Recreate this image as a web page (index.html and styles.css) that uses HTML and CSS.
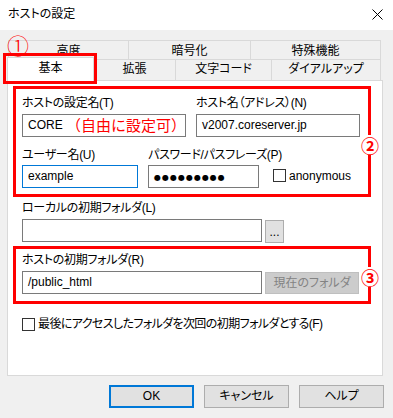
FILE: index.html
```html
<!DOCTYPE html>
<html lang="ja">
<head>
<meta charset="utf-8">
<title>ホストの設定</title>
<link rel="stylesheet" href="styles.css">
</head>
<body>
<div class="window">
  <div class="titlebar">
    <span class="title">ホストの設定</span>
    <svg class="close" width="11" height="11" viewBox="0 0 11 11"><path d="M0.5 0.5 L10.5 10.5 M10.5 0.5 L0.5 10.5" stroke="#000" stroke-width="1" fill="none"/></svg>
  </div>
  <div class="content">
    <div class="tabs">
      <div class="tabrow tabrow1">
        <div class="tab t-kodo">高度</div>
        <div class="tab t-ango">暗号化</div>
        <div class="tab t-toku">特殊機能</div>
      </div>
      <div class="tabrow tabrow2">
        <div class="tab sel t-kihon">基本</div>
        <div class="tab t-kaku">拡張</div>
        <div class="tab t-moji">文字コード</div>
        <div class="tab t-dial">ダイアルアップ</div>
      </div>
      <div class="mark-tab"></div>
      <div class="num num1">①</div>
    </div>
    <div class="panel">
      <div class="redbox box2">
        <div class="row row-a">
          <div class="field w164">
            <div class="label">ホストの設定名(T)</div>
            <div class="input">CORE <span class="note">（自由に設定可）</span></div>
          </div>
          <div class="field w164">
            <div class="label">ホスト名（アドレス）(N)</div>
            <div class="input">v2007.coreserver.jp</div>
          </div>
        </div>
        <div class="row row-b">
          <div class="field w116">
            <div class="label">ユーザー名(U)</div>
            <div class="input focus">example</div>
          </div>
          <div class="field w111">
            <div class="label">パスワード/パスフレーズ(P)</div>
            <div class="input pw"><span class="dots">●●●●●●●●●</span></div>
          </div>
          <div class="check anon"><span class="cb"></span><span>anonymous</span></div>
        </div>
        <div class="num num2">②</div>
      </div>
      <div class="local">
        <div class="label">ローカルの初期フォルダ(L)</div>
        <div class="inrow">
          <div class="input w240"></div>
          <div class="btn small">...</div>
        </div>
      </div>
      <div class="redbox box3">
        <div class="label">ホストの初期フォルダ(R)</div>
        <div class="inrow">
          <div class="input w240">/public_html</div>
          <div class="btn disabled">現在のフォルダ</div>
        </div>
        <div class="num num3">③</div>
      </div>
      <div class="check last"><span class="cb"></span><span class="cjk">最後にアクセスしたフォルダを次回の初期フォルダとする(F)</span></div>
    </div>
    <div class="buttons">
      <div class="btn big default">OK</div>
      <div class="btn big">キャンセル</div>
      <div class="btn big">ヘルプ</div>
    </div>
  </div>
</div>
</body>
</html>
```
FILE: styles.css
```css
html, body {
  margin: 0;
  padding: 0;
}
body {
  width: 393px;
  height: 418px;
  overflow: hidden;
  background: #f0f0f0;
  font-family: "Liberation Sans", "Noto Sans CJK JP", sans-serif;
  font-size: 12px;
  color: #000;
  font-feature-settings: "palt";
}
.window {
  display: flex;
  flex-direction: column;
  height: 418px;
}
.titlebar {
  height: 30px;
  background: #fff;
  display: flex;
  align-items: center;
  justify-content: space-between;
  padding: 0 10px 3px 8px;
  box-sizing: border-box;
}
.title { line-height: 16px; }
.close { display: block; margin-top: 1px; }
.content {
  padding: 10px 10px 0 7px;
}
.tabs {
  position: relative;
}
.tabrow {
  display: flex;
}
.tabrow1 {
  height: 19px;
  margin-left: 1px;
}
.tabrow2 {
  height: 21px;
}
.tab {
  box-sizing: border-box;
  border: 1px solid #d9d9d9;
  border-bottom: none;
  background: #f0f0f0;
  text-align: center;
  margin-right: -1px;
}
.tabrow1 .tab {
  height: 19px;
  line-height: 17px;
  padding-top: 2px;
}
.tabrow2 .tab {
  height: 21px;
  line-height: 18px;
}
.tabrow2 .tab.sel {
  background: #fff;
  height: 24px;
  margin-top: -2px;
  line-height: 20px;
  position: relative;
  z-index: 1;
}
.t-kodo { width: 121px; }
.t-ango { width: 123px; }
.t-toku { width: 131px; }
.t-kihon { width: 87px; }
.t-kaku { width: 83px; }
.t-moji { width: 97px; }
.t-dial { width: 110px; }
.mark-tab {
  position: absolute;
  left: -4px;
  top: 13px;
  width: 94px;
  height: 31px;
  box-sizing: border-box;
  border: 3px solid #ff0000;
  z-index: 2;
}
.num {
  position: absolute;
  color: #ff0000;
  font-family: "Noto Sans CJK JP", sans-serif;
  line-height: 20px;
  z-index: 3;
}
.num1 {
  left: 0px;
  top: -6px;
  font-size: 22px;
  font-weight: 300;
}
.num2, .num3 {
  font-size: 18px;
  font-weight: 700;
  background: #fff;
  width: 20px;
  text-align: center;
  right: -12px;
}
.num2 { top: 46px; }
.num3 { top: 18px; }
.panel {
  background: #fff;
  border: 1px solid #d9d9d9;
  box-sizing: border-box;
  width: 376px;
  height: 296px;
  padding: 5px 0 0 5px;
}
.redbox {
  position: relative;
  border: 3px solid #ff0000;
  box-sizing: border-box;
  width: 358px;
}
.box2 {
  height: 111px;
  padding: 6px 0 0 6px;
}
.row {
  display: flex;
}
.row-a { column-gap: 10px; }
.row-b {
  margin-top: 10px;
  align-items: flex-end;
}
.label {
  line-height: 16px;
  height: 16px;
  margin-bottom: 3px;
  white-space: nowrap;
  letter-spacing: -0.3px;
}
.row-b .label { margin-bottom: 2px; }
.input {
  box-sizing: border-box;
  height: 23px;
  border: 1px solid #7a7a7a;
  background: #fff;
  padding-left: 5px;
  line-height: 21px;
  white-space: nowrap;
  overflow: hidden;
}
.input.focus { border-color: #0078d7; }
.w164 { width: 164px; }
.w116 { width: 116px; margin-right: 10px; }
.w111 { width: 111px; margin-right: 14px; }
.w240 { width: 240px; }
.note {
  color: #ff0000;
  font-family: "Noto Sans CJK JP", sans-serif;
  font-size: 15px;
  font-feature-settings: normal;
  vertical-align: top;
  line-height: 20px;
}
.dots {
  font-family: "DejaVu Sans", sans-serif;
  font-size: 8px;
  letter-spacing: 1px;
}
.check {
  display: flex;
  align-items: center;
  line-height: 16px;
  white-space: nowrap;
}
.cb {
  width: 13px;
  height: 13px;
  box-sizing: border-box;
  border: 1px solid #333;
  background: #fff;
  margin-right: 3px;
  flex: none;
}
.cjk {
  letter-spacing: -0.6px;
}
.anon {
  height: 23px;
  margin-bottom: 1px;
}
.local {
  padding: 3px 0 0 9px;
}
.inrow {
  display: flex;
  column-gap: 3px;
  align-items: flex-start;
}
.btn {
  box-sizing: border-box;
  height: 23px;
  border: 1px solid #adadad;
  background: #e1e1e1;
  text-align: center;
  line-height: 21px;
  white-space: nowrap;
}
.btn.small {
  width: 19px;
  margin-top: 1px;
  line-height: 23px;
}
.btn.disabled {
  width: 94px;
  margin-top: 1px;
  height: 22px;
  line-height: 20px;
  background: #cccccc;
  border-color: #bfbfbf;
  color: #838383;
}
.box3 {
  margin-top: 3px;
  height: 58px;
  padding: 3px 0 0 6px;
}
.check.last {
  margin: 12px 0 0 9px;
}
.buttons {
  display: flex;
  justify-content: flex-end;
  column-gap: 10px;
  margin-top: 9px;
  margin-right: -1px;
}
.btn.big {
  width: 85px;
}
.btn.default {
  border: 2px solid #0078d7;
  line-height: 19px;
}
```
